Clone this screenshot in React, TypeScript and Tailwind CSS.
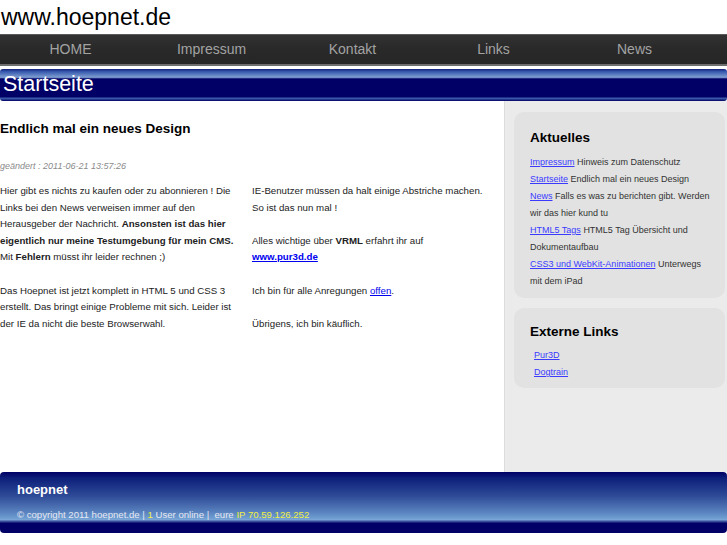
import React from "react";

const navItems = ["HOME", "Impressum", "Kontakt", "Links", "News"];

const news = [
  { link: "Impressum", text: "Hinweis zum Datenschutz" },
  { link: "Startseite", text: "Endlich mal ein neues Design" },
  { link: "News", text: "Falls es was zu berichten gibt. Werden wir das hier kund tu" },
  { link: "HTML5 Tags", text: "HTML5 Tag Übersicht und Dokumentaufbau" },
  { link: "CSS3 und WebKit-Animationen", text: "Unterwegs mit dem iPad" },
];

export default function App() {
  return (
    <div className="w-[727px] h-[545px] bg-white font-['Liberation_Sans',Arial,sans-serif] text-black overflow-hidden">
      <h1 className="h-[34px] text-[23px] leading-[34px] pl-[1px]">www.hoepnet.de</h1>

      <nav className="h-[32px] flex border-t-[1px] border-t-[#5a5a5a] border-b-[2px] border-b-[#6e6e6e] bg-[linear-gradient(to_bottom,#333333,#2a2a2a_40%,#262626)]">
        {navItems.map((item) => (
          <div key={item} className="w-[141px] text-center text-[14px] leading-[29px] text-[#a3a3a3]">
            {item}
          </div>
        ))}
      </nav>

      <div className="mt-[3px] h-[32px] rounded-[3px] bg-[linear-gradient(to_bottom,#14207a_0%,#3558ad_8%,#7f9fd2_26%,#000066_31%,#000066_86%,#3a5aa8_92%,#000066_100%)] text-white text-[21.5px] leading-[30px] pl-[3px]">
        Startseite
      </div>

      <div className="flex h-[371px]">
        <main className="w-[504px] pt-[19px]">
          <h2 className="text-[13.5px] font-bold leading-[17px]">Endlich mal ein neues Design</h2>
          <p className="mt-[23px] text-[9px] italic text-[#8a8a8a] leading-[12px]">geändert : 2011-06-21 13:57:26</p>
          <div className="flex gap-[12px] mt-[11px] text-[9.7px] leading-[16.6px] text-[#222]">
            <div className="w-[240px]">
              <p>
                Hier gibt es nichts zu kaufen oder zu abonnieren ! Die Links bei den News verweisen immer auf den
                Herausgeber der Nachricht. <b>Ansonsten ist das hier eigentlich nur meine Testumgebung für mein CMS.</b>{" "}
                Mit <b>Fehlern</b> müsst ihr leider rechnen ;)
              </p>
              <p className="mt-[16.6px]">
                Das Hoepnet ist jetzt komplett in HTML 5 und CSS 3 erstellt. Das bringt einige Probleme mit sich. Leider ist
                der IE da nicht die beste Browserwahl.
              </p>
            </div>
            <div className="w-[236px]">
              <p>IE-Benutzer müssen da halt einige Abstriche machen. So ist das nun mal !</p>
              <p className="mt-[16.6px]">
                Alles wichtige über <b>VRML</b> erfahrt ihr auf
                <br />
                <a className="font-bold underline text-[#0000ee]">www.pur3d.de</a>
              </p>
              <p className="mt-[16.6px]">
                Ich bin für alle Anregungen <a className="underline text-[#0000ee]">offen</a>.
              </p>
              <p className="mt-[16.6px]">Übrigens, ich bin käuflich.</p>
            </div>
          </div>
        </main>

        <aside className="flex-1 bg-[#ebebeb] border-l border-[#dcdcdc] pt-[11px] pl-[9px] pr-[2px]">
          <section className="rounded-[10px] bg-[#e2e2e2] pl-[16px] pr-[13px] pt-[17px] pb-[8px]">
            <h3 className="text-[13.5px] font-bold leading-[17px]">Aktuelles</h3>
            <ul className="mt-[8px] text-[9px] leading-[17px] text-[#333]">
              {news.map((n) => (
                <li key={n.link}>
                  <a className="underline text-[#3b3bff]">{n.link}</a> {n.text}
                </li>
              ))}
            </ul>
          </section>
          <section className="mt-[10px] rounded-[10px] bg-[#e2e2e2] px-[16px] pt-[15px] pb-[7px]">
            <h3 className="text-[13.5px] font-bold leading-[17px]">Externe Links</h3>
            <ul className="mt-[7px] pl-[4px] text-[9px] leading-[17px]">
              <li>
                <a className="underline text-[#3b3bff]">Pur3D</a>
              </li>
              <li>
                <a className="underline text-[#3b3bff]">Dogtrain</a>
              </li>
            </ul>
          </section>
        </aside>
      </div>

      <footer className="h-[61px] rounded-[4px] bg-[linear-gradient(to_bottom,#000066_0%,#0d1f7a_10%,#2f4c98_40%,#5880bd_65%,#6c9bd0_75%,#7aa5d6_78%,#000066_84%,#000066_100%)] px-[17px] pt-[10px]">
        <div className="text-[13px] font-bold text-white leading-[16px]">hoepnet</div>
        <div className="mt-[10px] text-[9.6px] leading-[14px] text-[#e6e8f2]">
          © copyright 2011 hoepnet.de | <span className="text-[#f0f040]">1</span> User online |&nbsp; eure{" "}
          <span className="text-[#f0f040]">IP 70.59.126.252</span>
        </div>
      </footer>
    </div>
  );
}
